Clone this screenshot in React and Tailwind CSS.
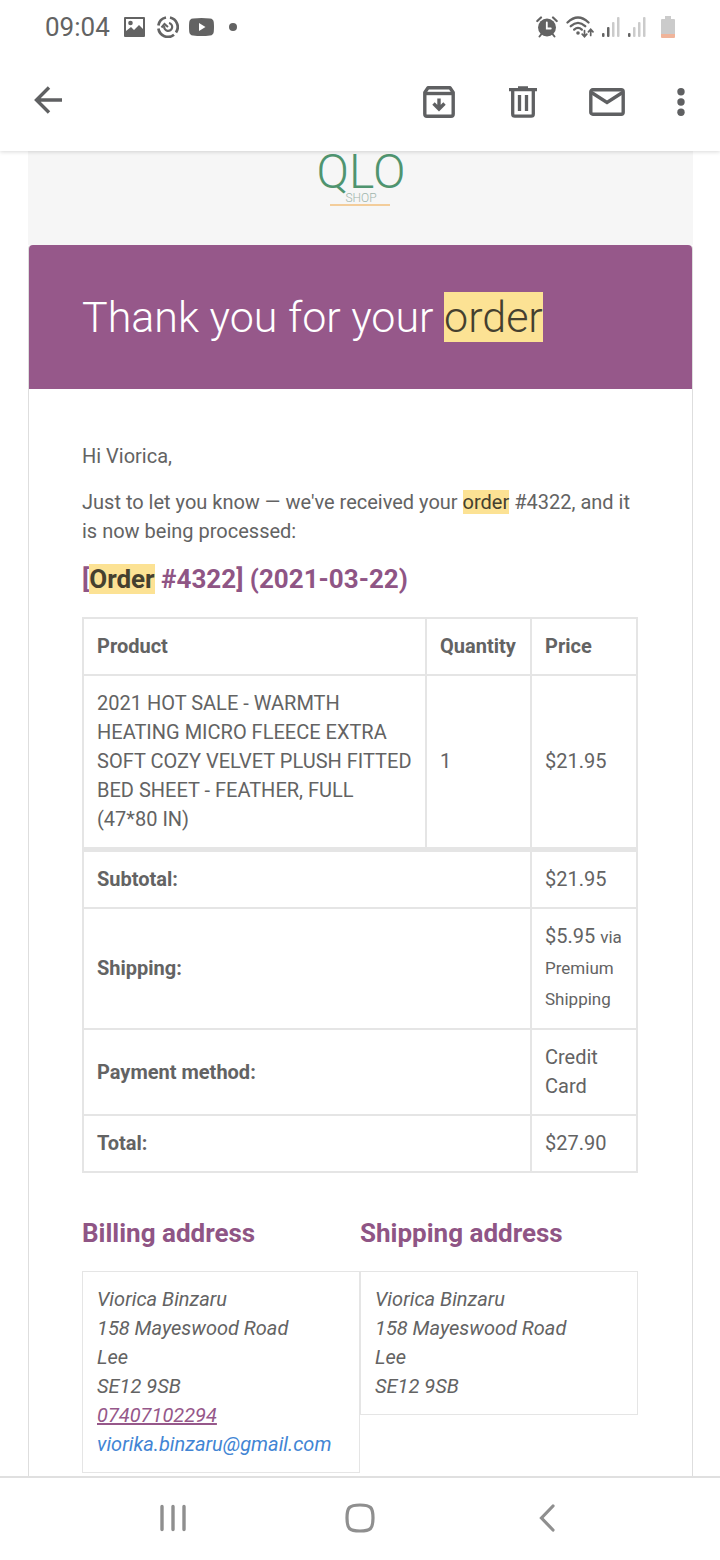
import React from 'react';

const items = [
    {
        name: '2021 HOT SALE - WARMTH HEATING MICRO FLEECE EXTRA SOFT COZY VELVET PLUSH FITTED BED SHEET - FEATHER, FULL (47*80 IN)',
        quantity: 1,
        price: '$21.95'
    }
];

const address = ['Viorica Binzaru', '158 Mayeswood Road', 'Lee', 'SE12 9SB'];

const Signal = ({ level }) => (
    <svg width="18" height="20" viewBox="0 0 18 20">
        {[4, 10, 15, 20].map((h, i) => (
            <rect key={h} x={i * 5} y={20 - h} width="2.500" height={h} rx="1" fill={i < level ? '#636363' : '#cbcbcb'} />
        ))}
    </svg>
);

const StatusBar = () => (
    <div className="z-20 flex h-[53px] items-center justify-between bg-white px-[45px] text-[#636363]">
        <div className="flex items-center">
            <span className="mr-[14px] text-[26px] leading-[30px]">09:04</span>
            <svg className="mr-3" width="21" height="20" viewBox="0 0 21 20">
                <path fill="currentColor" fillRule="evenodd" d="M1 0h19a1 1 0 0 1 1 1v18a1 1 0 0 1-1 1H1a1 1 0 0 1-1-1V1a1 1 0 0 1 1-1ZM2 2v12l5-4 3 3 5-5 4 4V2Z" />
                <circle cx="6.500" cy="6" r="2.300" fill="currentColor" />
            </svg>
            <svg className="mr-[10px]" width="22" height="22" viewBox="0 0 22 22" fill="none" stroke="currentColor">
                <path d="M9 1.500A9.700 9.700 0 0 0 1.400 9.500M1.400 12.500A9.700 9.700 0 0 0 17 18.800M13 1.500A9.700 9.700 0 0 1 19 16.500" strokeWidth="2.700" />
                <path d="M7.300 10a4 4 0 1 0 4.700-3" strokeWidth="2.200" />
                <path d="M4.500 11.500 7.500 8l3.500 3" strokeWidth="2" />
            </svg>
            <svg className="mr-[15px]" width="25" height="18" viewBox="0 0 25 18">
                <path fill="currentColor" fillRule="evenodd" d="M4 .500Q12.500-.500 21 .500q3.500.300 3.800 4Q25.200 9 24.800 13.500q-.300 3.700-3.800 4-8.500 1-17 0-3.500-.300-3.800-4Q-.200 9 .200 4.500.500.800 4 .500ZM10 5v8l6.500-4Z" />
            </svg>
            <span className="size-2 rounded-full bg-[#636363]" />
        </div>
        <div className="flex items-center">
            <svg className="mr-2" width="22" height="22" viewBox="0 0 22 22" fill="none" stroke="currentColor" strokeLinecap="round">
                <circle cx="11" cy="11.500" r="9" fill="currentColor" stroke="none" />
                <path d="M1.300 5 5 1.500M20.700 5 17 1.500" strokeWidth="2.200" />
                <path d="m5.500 18-2 2.500M16.500 18l2 2.500" strokeWidth="2" />
                <path d="M10.800 6.500v6h4" stroke="#fff" strokeWidth="1.800" />
            </svg>
            <svg className="mr-2" width="28" height="22" viewBox="0 0 28 22" fill="none" stroke="currentColor" strokeWidth="2.300" strokeLinecap="round">
                <path d="M1.500 6.500Q12-3.500 22.500 6.500M4.800 10.200q7.200-6.700 14.400 0M8.200 13.600q3.800-3.500 7.600 0" />
                <circle cx="12" cy="17" r="1.800" fill="currentColor" stroke="none" />
                <path d="M18.500 14.500v6m-2.300-2.300 2.300 2.500 2.300-2.500M24.700 19.500v-6m-2.300 2.300 2.300-2.500 2.300 2.500" strokeWidth="1.700" />
            </svg>
            <span className="mr-2"><Signal level={2} /></span>
            <span className="mr-[15px]"><Signal level={1} /></span>
            <svg width="14" height="22" viewBox="0 0 14 22">
                <path fill="#cbcbcb" d="M4 0h6v3h3q1 0 1 1v14H0V4q0-1 1-1h3Z" />
                <path fill="#f0b49a" d="M0 18h14v3q0 1-1 1H1q-1 0-1-1Z" />
            </svg>
        </div>
    </div>
);

const Toolbar = () => (
    <header className="z-10 flex h-[98px] items-center bg-white pr-[35px] pl-[34px] text-[#5f6062] shadow-[0_1px_4px_rgba(0,0,0,0.15)]">
        <button aria-label="Back" className="mr-auto pb-1">
            <svg width="28" height="28" viewBox="0 0 28 28" fill="none" stroke="currentColor" strokeWidth="3.400">
                <path d="M28 14H3M15 1.500 2.500 14 15 26.500" />
            </svg>
        </button>
        <button aria-label="Archive" className="mr-[54px]">
            <svg width="32" height="32" viewBox="0 0 32 32" fill="none" stroke="currentColor" strokeWidth="3.400" strokeLinejoin="round">
                <path d="M1.800 6.500 5 1.800h22l3.200 4.700V28q0 2.200-2.200 2.200H4Q1.800 30.200 1.800 28Z" />
                <path d="M2 7.500h28" />
                <path d="M16 12.500v10M10.500 17.500l5.500 5.500 5.500-5.500" strokeLinejoin="miter" />
            </svg>
        </button>
        <button aria-label="Delete" className="mr-[52px]">
            <svg width="28" height="32" viewBox="0 0 28 32" fill="none" stroke="currentColor" strokeWidth="3.300">
                <path d="M0 3.700h28M9 1.800h10" />
                <path d="M3.700 4v24q0 2.200 2.200 2.200h16.200q2.200 0 2.200-2.200V4" />
                <path d="M10.500 9v16M17.500 9v16" />
            </svg>
        </button>
        <button aria-label="Mark as unread" className="mr-[52px]">
            <svg width="36" height="28" viewBox="0 0 36 28" fill="none" stroke="currentColor" strokeWidth="3.400">
                <rect x="1.800" y="1.800" width="32.400" height="24.400" rx="2" />
                <path d="m2.500 4.500 15.500 10 15.500-10" />
            </svg>
        </button>
        <button aria-label="More options">
            <svg width="8" height="28" viewBox="0 0 8 28" fill="currentColor">
                <circle cx="4" cy="3.700" r="3.700" />
                <circle cx="4" cy="14" r="3.700" />
                <circle cx="4" cy="24.300" r="3.700" />
            </svg>
        </button>
    </header>
);

const Mark = ({ children }) => <mark className="bg-[#fce294] text-[#45402f]">{children}</mark>;

const cell = 'border-2 border-[#e5e5e5] p-[13px] text-left align-middle';
const firstTotalCell = 'border-2 border-t-[5px] border-[#e5e5e5] p-[13px] text-left align-middle';

const OrderTable = () => (
    <table className="mt-[22px] w-full table-fixed border-collapse">
        <colgroup>
            <col />
            <col className="w-[105px]" />
            <col className="w-[106px]" />
        </colgroup>
        <thead>
            <tr>
                <th scope="col" className={cell}>Product</th>
                <th scope="col" className={cell}>Quantity</th>
                <th scope="col" className={cell}>Price</th>
            </tr>
        </thead>
        <tbody>
            {items.map(item => (
                <tr key={item.name}>
                    <td className={cell}>{item.name}</td>
                    <td className={cell}>{item.quantity}</td>
                    <td className={cell}>{item.price}</td>
                </tr>
            ))}
        </tbody>
        <tfoot>
            <tr>
                <th scope="row" colSpan="2" className={firstTotalCell}>Subtotal:</th>
                <td className={firstTotalCell}>$21.95</td>
            </tr>
            <tr>
                <th scope="row" colSpan="2" className={cell}>Shipping:</th>
                <td className={cell}>
                    $5.95 <small className="text-[17px] leading-[31px]">via Premium Shipping</small>
                </td>
            </tr>
            <tr>
                <th scope="row" colSpan="2" className={cell}>Payment method:</th>
                <td className={cell}>Credit Card</td>
            </tr>
            <tr>
                <th scope="row" colSpan="2" className={cell}>Total:</th>
                <td className={cell}>$27.90</td>
            </tr>
        </tfoot>
    </table>
);

const AddressBlock = ({ title, children }) => (
    <section className="flex-1">
        <h2 className="mb-[22px] text-[26px] leading-8 font-bold text-[#8f5585]">{title}</h2>
        <address className="border border-[#e5e5e5] px-[14px] py-[13px]">
            {address.map(line => (
                <div key={line}>{line}</div>
            ))}
            {children}
        </address>
    </section>
);

const NavBar = () => (
    <nav className="grid h-[84px] grid-cols-3 items-center justify-items-center border-t-2 border-[#e0e0e0] bg-white px-[79px] pb-[2px] text-[#8f8f8f]">
        <button aria-label="Recents">
            <svg width="26" height="28" viewBox="0 0 26 28" stroke="currentColor" strokeWidth="3.400" strokeLinecap="round">
                <path d="M2 2.500v23M13 2.500v23M24 2.500v23" />
            </svg>
        </button>
        <button aria-label="Home">
            <svg width="30" height="30" viewBox="0 0 30 30" fill="none" stroke="currentColor" strokeWidth="3.200">
                <path d="M15 2q8 0 10.500 2.500T28 15t-2.500 10.500T15 28 4.500 25.500 2 15 4.500 4.500 15 2Z" />
            </svg>
        </button>
        <button aria-label="Go back">
            <svg width="16" height="28" viewBox="0 0 16 28" fill="none" stroke="currentColor" strokeWidth="3.200" strokeLinecap="round">
                <path d="M14 2 2.500 14 14 26" />
            </svg>
        </button>
    </nav>
);

const App = () => {
    return (
        <div className="flex min-h-screen flex-col bg-white font-['Roboto',sans-serif] text-[20px] leading-[29px] text-[#636363]">
            <StatusBar />
            <Toolbar />

            <main className="flex flex-1 flex-col pr-[27px] pl-7">
                {/* Shop logo */}
                <div className="flex h-[94px] justify-center overflow-hidden bg-[#f6f6f6]">
                    <svg width="90" height="60" viewBox="0 0 90 60" fontFamily="Roboto, sans-serif">
                        <text x="45" y="37" textAnchor="middle" fontSize="48" fontWeight="300" fill="#4f946f">QLO</text>
                        <text x="45" y="51" textAnchor="middle" fontSize="12" fontWeight="300" fill="#9fb5ac">SHOP</text>
                        <path d="M14 54h60" stroke="#f3cd9b" strokeWidth="2" />
                    </svg>
                </div>

                <article className="flex-1 rounded-t border-x border-[#dedede]">
                    <div className="rounded-t bg-[#96588a] px-[53px] py-[41px]">
                        <h1 className="text-[43px] leading-[62px] font-light text-white">
                            Thank you for your <Mark>order</Mark>
                        </h1>
                    </div>

                    <div className="pt-[53px] pr-[54px] pb-[3px] pl-[53px]">
                        <p className="mb-[17px]">Hi Viorica,</p>
                        <p className="mb-[17px]">
                            Just to let you know — we've received your <Mark>order</Mark> #4322, and it is now being processed:
                        </p>
                        <h2 className="text-[26px] leading-8 font-bold text-[#8f5585]">
                            [<Mark>Order</Mark> #4322] (2021-03-22)
                        </h2>

                        <OrderTable />

                        <div className="mt-11 flex items-start">
                            <AddressBlock title="Billing address">
                                <a href="tel:07407102294" className="block text-[#96588a] underline">07407102294</a>
                                <a href="mailto:viorika.binzaru@gmail.com" className="block text-[#4285d4]">viorika.binzaru@gmail.com</a>
                            </AddressBlock>
                            <AddressBlock title="Shipping address" />
                        </div>
                    </div>
                </article>
            </main>

            <NavBar />
        </div>
    );
};

export default App;
